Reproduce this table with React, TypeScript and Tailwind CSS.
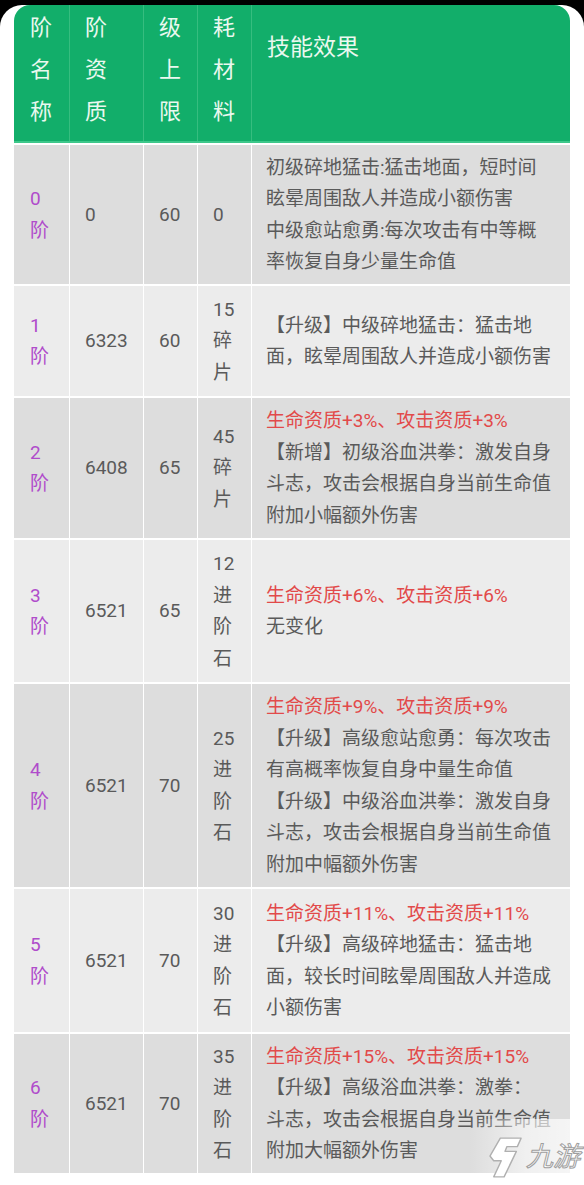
import React from "react";

type Row = {
  lv: string;
  apt: string;
  cap: string;
  mat: string[];
  red?: string;
  lines: string[];
  h: string;
};

const rows: Row[] = [
  {
    lv: "0",
    apt: "0",
    cap: "60",
    mat: ["0"],
    h: "h-[141px]",
    lines: [
      "初级碎地猛击:猛击地面，短时间",
      "眩晕周围敌人并造成小额伤害",
      "中级愈站愈勇:每次攻击有中等概",
      "率恢复自身少量生命值",
    ],
  },
  {
    lv: "1",
    apt: "6323",
    cap: "60",
    mat: ["15", "碎", "片"],
    h: "h-[112px]",
    lines: ["【升级】中级碎地猛击：猛击地", "面，眩晕周围敌人并造成小额伤害"],
  },
  {
    lv: "2",
    apt: "6408",
    cap: "65",
    mat: ["45", "碎", "片"],
    h: "h-[142px]",
    red: "生命资质+3%、攻击资质+3%",
    lines: ["【新增】初级浴血洪拳：激发自身", "斗志，攻击会根据自身当前生命值", "附加小幅额外伤害"],
  },
  {
    lv: "3",
    apt: "6521",
    cap: "65",
    mat: ["12", "进", "阶", "石"],
    h: "h-[144px]",
    red: "生命资质+6%、攻击资质+6%",
    lines: ["无变化"],
  },
  {
    lv: "4",
    apt: "6521",
    cap: "70",
    mat: ["25", "进", "阶", "石"],
    h: "h-[205px]",
    red: "生命资质+9%、攻击资质+9%",
    lines: [
      "【升级】高级愈站愈勇：每次攻击",
      "有高概率恢复自身中量生命值",
      "【升级】中级浴血洪拳：激发自身",
      "斗志，攻击会根据自身当前生命值",
      "附加中幅额外伤害",
    ],
  },
  {
    lv: "5",
    apt: "6521",
    cap: "70",
    mat: ["30", "进", "阶", "石"],
    h: "h-[145px]",
    red: "生命资质+11%、攻击资质+11%",
    lines: ["【升级】高级碎地猛击：猛击地", "面，较长时间眩晕周围敌人并造成", "小额伤害"],
  },
  {
    lv: "6",
    apt: "6521",
    cap: "70",
    mat: ["35", "进", "阶", "石"],
    h: "h-[141px]",
    red: "生命资质+15%、攻击资质+15%",
    lines: ["【升级】高级浴血洪拳：激拳：", "斗志，攻击会根据自身当前生命值", "附加大幅额外伤害"],
  },
];

const font = { fontFamily: '"Roboto", "Noto Sans CJK SC", sans-serif' };

function HeaderCell({ lines, w, first }: { lines: string[]; w: string; first?: boolean }) {
  return (
    <div
      className={`${w} ${first ? "pl-[16px]" : "border-l border-[#36bd7f] pl-[15px]"} pt-[2px] flex flex-col text-[22px] leading-[42px] text-[#eaf8ef]`}
    >
      {lines.map((l, i) => (
        <span key={i}>{l}</span>
      ))}
    </div>
  );
}

export default function App() {
  return (
    <div className="w-[584px] h-[1185px] bg-black overflow-hidden" style={font}>
      <div className="relative mt-[5px] h-[1180px] bg-white rounded-t-[22px] px-[14px]">
        {/* header */}
        <div className="flex h-[138px] bg-[#12ae6a] rounded-t-[16px] border-b-2 border-[#3dc78a]">
          <HeaderCell lines={["阶", "名", "称"]} w="w-[55px]" first />
          <HeaderCell lines={["阶", "资", "质"]} w="w-[74px]" />
          <HeaderCell lines={["级", "上", "限"]} w="w-[54px]" />
          <HeaderCell lines={["耗", "材", "料"]} w="w-[54px]" />
          <div className="w-[319px] border-l border-[#36bd7f] pl-[15px] pt-[22px] text-[23px] leading-[42px] text-[#eaf8ef]">
            技能效果
          </div>
        </div>
        {/* body */}
        {rows.map((r, i) => (
          <div
            key={i}
            className={`flex ${r.h} border-t-2 border-white text-[19px] leading-[31.5px] text-[#5a5a5a] ${
              i % 2 === 0 ? "bg-[#dddddd]" : "bg-[#ececec]"
            }`}
          >
            <div className="w-[55px] pl-[16px] flex flex-col justify-center text-[#b04ccb]">
              <span>{r.lv}</span>
              <span>阶</span>
            </div>
            <div className="w-[74px] border-l border-white pl-[15px] flex items-center">{r.apt}</div>
            <div className="w-[54px] border-l border-white pl-[15px] flex items-center">{r.cap}</div>
            <div className="w-[54px] border-l border-white pl-[15px] flex flex-col justify-center">
              {r.mat.map((m, j) => (
                <span key={j}>{m}</span>
              ))}
            </div>
            <div className="w-[319px] border-l border-white pl-[14px] flex flex-col justify-center whitespace-nowrap">
              {r.red && <span className="text-[#e24a4a]">{r.red}</span>}
              {r.lines.map((l, j) => (
                <span key={j}>{l}</span>
              ))}
            </div>
          </div>
        ))}
        {/* watermark */}
        <div className="absolute right-0 bottom-0 w-[115px] h-[66px] bg-gradient-to-r from-[#ffffff00] via-[#ffffff90] to-[#ffffffc0]" />
        <div className="absolute right-[4px] bottom-[6px] flex items-center gap-[3px]">
          <svg width="34" height="44" viewBox="0 0 36 46">
            <path
              d="M12 3 L34 3 L30 12 L19 12 L17 17 L29 17 L16 44 L5 44 L13 27 L5 27 L1 22 Z"
              fill="#ffffff"
              stroke="#b0b0b0"
              strokeWidth="1.5"
              strokeLinejoin="round"
            />
          </svg>
          <span className="text-[27px] italic font-normal text-white leading-none [-webkit-text-stroke:1px_#9f9f9f]">
            九游
          </span>
        </div>
      </div>
    </div>
  );
}
